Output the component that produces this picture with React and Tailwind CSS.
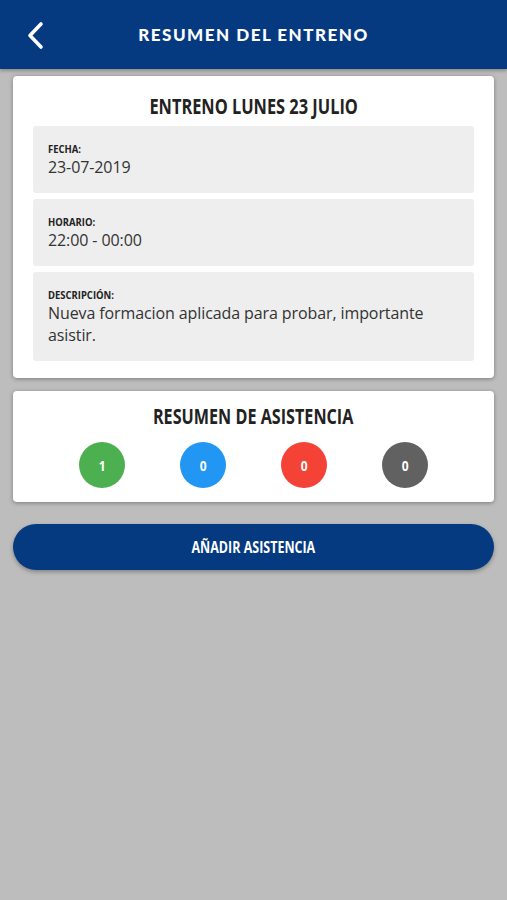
// condensed headings: no condensed face installed, so squeeze Open Sans bold
const cond = { fontFamily: "'Open Sans', sans-serif" };

function BackIcon() {
  return (
    <svg width="20" height="29" viewBox="0 0 20 29" fill="none">
      <polyline
        points="15,3 4,14.5 15,26"
        stroke="white"
        strokeWidth="3.6"
        strokeLinecap="round"
        strokeLinejoin="round"
      />
    </svg>
  );
}

function InfoBox({ label, children }) {
  return (
    <div className="bg-[#eeeeee] rounded-[3px] px-[15px] pt-[16px] pb-[15px]">
      <div className="text-[11px] font-bold text-[#222] leading-[14px] h-[14px]" style={cond}>
        <span className="inline-block origin-left scale-x-[0.86]">{label}</span>
      </div>
      <div className="text-[16px] text-[#333] leading-[22px] font-['Open_Sans',sans-serif] tracking-[-0.1px]">
        {children}
      </div>
    </div>
  );
}

function Counter({ value, color }) {
  return (
    <div
      className={`w-[46px] h-[46px] rounded-full flex items-center justify-center text-white text-[15px] font-bold ${color}`}
      style={cond}
    >
      <span className="inline-block scale-x-[0.8]">{value}</span>
    </div>
  );
}

export default function App() {
  return (
    <div className="min-h-[900px] bg-[#bdbdbd] font-['Open_Sans',sans-serif]">
      <header className="h-[69px] bg-[#063a80] flex items-center relative shadow-[0_2px_3px_rgba(0,0,0,0.25)]">
        <button className="absolute left-[26px] top-[21px]">
          <BackIcon />
        </button>
        <h1 className="w-full text-center text-white text-[17px] font-black tracking-[1.5px] font-['Lato',sans-serif]">
          RESUMEN DEL ENTRENO
        </h1>
      </header>

      <div className="px-[13px] pt-[7px] flex flex-col">
        <div className="bg-white rounded-[4px] shadow-[0_1px_4px_rgba(0,0,0,0.35)] px-[20px] pt-[15px] pb-[17px]">
          <h2 className="text-center text-[21px] font-bold text-[#222] leading-[30px] mb-[5px] whitespace-nowrap" style={cond}>
            <span className="inline-block scale-x-[0.78]">ENTRENO LUNES 23 JULIO</span>
          </h2>
          <div className="flex flex-col gap-[6px]">
            <InfoBox label="FECHA:">23-07-2019</InfoBox>
            <InfoBox label="HORARIO:">22:00 - 00:00</InfoBox>
            <InfoBox label="DESCRIPCIÓN:">Nueva formacion aplicada para probar, importante asistir.</InfoBox>
          </div>
        </div>

        <div className="mt-[13px] bg-white rounded-[4px] shadow-[0_1px_4px_rgba(0,0,0,0.35)] pt-[11px] pb-[14px]">
          <h2 className="text-center text-[21px] font-bold text-[#222] leading-[28px] whitespace-nowrap" style={cond}>
            <span className="inline-block scale-x-[0.77]">RESUMEN DE ASISTENCIA</span>
          </h2>
          <div className="mt-[12px] flex justify-center gap-[55px]">
            <Counter value="1" color="bg-[#4caf50]" />
            <Counter value="0" color="bg-[#2196f3]" />
            <Counter value="0" color="bg-[#f44336]" />
            <Counter value="0" color="bg-[#616161]" />
          </div>
        </div>

        <button
          className="mt-[22px] h-[46px] rounded-full bg-[#063a80] text-white text-[16px] font-bold shadow-[0_2px_4px_rgba(0,0,0,0.3)] whitespace-nowrap"
          style={cond}
        >
          <span className="inline-block scale-x-[0.78]">AÑADIR ASISTENCIA</span>
        </button>
      </div>
    </div>
  );
}
